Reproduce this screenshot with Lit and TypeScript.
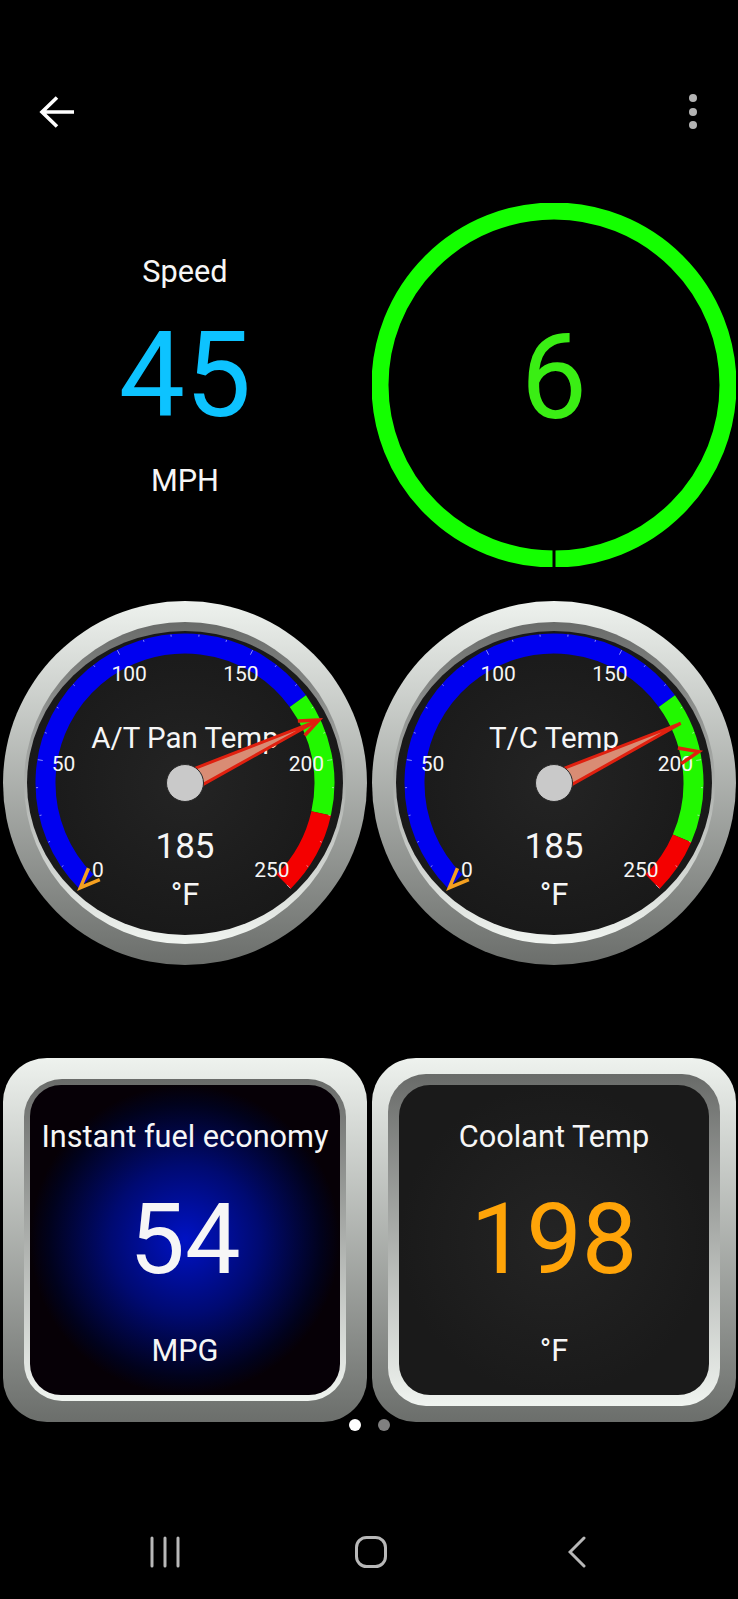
import { LitElement, html, svg, css } from 'lit';
import { customElement, property } from 'lit/decorators.js';

const CX = 182;
const CY = 182;

// compass angle for a gauge value: 0 sits at -135deg, 250 at +135deg
const valueAngle = (v: number) => -135 + (v / 250) * 270;

const polar = (deg: number, r: number): [number, number] => {
  const a = (deg * Math.PI) / 180;
  return [CX + r * Math.sin(a), CY - r * Math.cos(a)];
};

const arcPath = (from: number, to: number, r: number) => {
  const [x1, y1] = polar(valueAngle(from), r);
  const [x2, y2] = polar(valueAngle(to), r);
  const large = valueAngle(to) - valueAngle(from) > 180 ? 1 : 0;
  return `M${x1} ${y1}A${r} ${r} 0 ${large} 1 ${x2} ${y2}`;
};

@customElement('obd-gauge')
export class ObdGauge extends LitElement {
  @property({ type: String }) label = '';
  @property({ type: Number }) value = 0;
  @property({ type: Number }) greenEnd = 220;
  @property({ type: Number }) needleLength = 144;
  @property({ type: Number }) maxValue = 185;
  @property({ type: String }) gid = 'g';

  static styles = css`
    :host {
      display: block;
      width: 364px;
      height: 364px;
    }
    svg {
      display: block;
    }
    text {
      font-family: Roboto, sans-serif;
      fill: #f6f6f6;
      text-anchor: middle;
    }
    .scale {
      font-size: 21px;
    }
    .title {
      font-size: 29.5px;
    }
    .reading {
      font-size: 35px;
    }
    .unit {
      font-size: 31px;
    }
  `;

  private _ticks() {
    const ticks = [];
    for (let v = 0; v <= 250; v += 10) {
      const major = v % 50 === 0;
      const [x1, y1] = polar(valueAngle(v), major ? 144 : 147);
      const [x2, y2] = polar(valueAngle(v), 149);
      ticks.push(svg`<line x1=${x1} y1=${y1} x2=${x2} y2=${y2} stroke="#e8e8ff" stroke-width="0.8" opacity="0.75"></line>`);
    }
    return ticks;
  }

  private _scale() {
    return [0, 50, 100, 150, 200, 250].map((v) => {
      const [x, y] = polar(valueAngle(v), 123);
      return svg`<text class="scale" x=${x} y=${y + 7.5}>${v}</text>`;
    });
  }

  private _chevron(v: number, color: string) {
    const a = valueAngle(v);
    const tip = polar(a, 148);
    const off = (along: number, across: number) => {
      const r = (a * Math.PI) / 180;
      const ux = Math.sin(r);
      const uy = -Math.cos(r);
      return [tip[0] - ux * along - uy * across, tip[1] - uy * along + ux * across].join(',');
    };
    return svg`<polyline points="${off(19.5, 8)} ${tip.join(',')} ${off(19.5, -8)}" fill="none" stroke=${color} stroke-width="3.5"></polyline>`;
  }

  private _needle() {
    const a = valueAngle(this.value);
    const r = (a * Math.PI) / 180;
    const nx = Math.cos(r) * 9;
    const ny = Math.sin(r) * 9;
    const [bx, by] = polar(a, 16);
    const tip = polar(a, this.needleLength);
    return svg`<polygon points="${bx - nx},${by - ny} ${tip.join(',')} ${bx + nx},${by + ny}" fill="#d98c74" stroke="#e0200f" stroke-width="3"></polygon>`;
  }

  render() {
    const id = this.gid;
    return html`
      <svg width="364" height="364" viewBox="0 0 364 364">
        <defs>
          <linearGradient id="${id}-rim" x1="0" y1="0" x2="0" y2="1">
            <stop offset="0" stop-color="#eef2ee"></stop>
            <stop offset="1" stop-color="#6b6e6b"></stop>
          </linearGradient>
          <linearGradient id="${id}-bezel" x1="0" y1="0" x2="0" y2="1">
            <stop offset="0" stop-color="#696b69"></stop>
            <stop offset="1" stop-color="#f0f4f0"></stop>
          </linearGradient>
          <radialGradient id="${id}-face">
            <stop offset="0" stop-color="#242424"></stop>
            <stop offset="1" stop-color="#191919"></stop>
          </radialGradient>
        </defs>
        <circle cx=${CX} cy=${CY} r="182" fill="url(#${id}-rim)"></circle>
        <circle cx=${CX} cy=${CY} r="161" fill="url(#${id}-bezel)"></circle>
        <ellipse cx=${CX} cy=${CY} rx="158" ry="152" fill="url(#${id}-face)"></ellipse>
        <g fill="none" stroke-width="20">
          <path d=${arcPath(0, 175, 139.5)} stroke="#0000f0"></path>
          <path d=${arcPath(175, this.greenEnd, 139.5)} stroke="#22f800"></path>
          <path d=${arcPath(this.greenEnd, 250, 139.5)} stroke="#f40000"></path>
        </g>
        ${this._ticks()} ${this._scale()}
        <text class="title" x=${CX} y="147">${this.label}</text>
        <text class="reading" x=${CX} y="257">${this.value}</text>
        <text class="unit" x=${CX} y="304">°F</text>
        ${this._chevron(0, '#f5a020')} ${this._chevron(this.maxValue, '#e0200f')} ${this._needle()}
        <circle cx=${CX} cy=${CY} r="18.5" fill="#c9c9c9" stroke="#2a2a2a" stroke-width="1"></circle>
      </svg>
    `;
  }
}

@customElement('obd-tile')
export class ObdTile extends LitElement {
  @property({ type: String }) label = '';
  @property({ type: String }) value = '';
  @property({ type: String }) unit = '';
  @property({ type: Boolean, reflect: true }) blue = false;

  static styles = css`
    :host {
      display: block;
      width: 364px;
      height: 364px;
      box-sizing: border-box;
      border-radius: 44px;
      background: linear-gradient(#eef2ee, #6b6e6b);
      padding: 16px;
      font-family: Roboto, sans-serif;
      color: #f6f6f6;
      text-align: center;
    }
    :host([blue]) {
      padding: 21px;
    }
    .bezel {
      height: 100%;
      box-sizing: border-box;
      padding: 11px;
      border-radius: 38px;
      background: linear-gradient(#696b69, #f0f4f0);
    }
    :host([blue]) .bezel {
      padding: 6px;
    }
    .face {
      height: 100%;
      border-radius: 31px;
      overflow: hidden;
      background: radial-gradient(circle closest-side, #242424, #1a1a1a);
    }
    :host([blue]) .face {
      background: radial-gradient(circle closest-side, #0012c4 0%, #000a72 48%, #01021c 88%, #060006 100%);
    }
    .label {
      font-size: 30.7px;
      line-height: 36px;
      padding-top: 34px;
      white-space: nowrap;
    }
    .value {
      font-size: 99px;
      line-height: 102px;
      margin-top: 33px;
    }
    .amber {
      color: #ffa408;
    }
    .unit {
      font-size: 30.7px;
      line-height: 36px;
      margin-top: 43px;
    }
  `;

  render() {
    return html`
      <div class="bezel">
        <div class="face">
          <div class="label">${this.label}</div>
          <div class="value ${this.blue ? '' : 'amber'}">${this.value}</div>
          <div class="unit">${this.unit}</div>
        </div>
      </div>
    `;
  }
}

@customElement('app-root')
export class AppRoot extends LitElement {
  static styles = css`
    :host {
      display: block;
      width: 738px;
      height: 1599px;
      overflow: hidden;
      background: #000;
      font-family: Roboto, sans-serif;
      color: #f6f6f6;
    }
    svg {
      display: block;
    }
    .topbar {
      display: flex;
      justify-content: space-between;
      align-items: center;
      height: 40px;
      padding: 92px 40px 71px 39px;
    }
    .row {
      display: grid;
      grid-template-columns: 364px 364px;
      column-gap: 5px;
      padding-left: 3px;
    }
    .row + .row {
      margin-top: 34px;
    }
    .row.tiles {
      margin-top: 93px;
    }
    .speed {
      text-align: center;
      padding-top: 51px;
    }
    .speed .label {
      font-size: 30.7px;
      line-height: 36px;
    }
    .speed .value {
      font-size: 118px;
      line-height: 120px;
      color: #0dc3ff;
      margin-top: 26px;
    }
    .speed .unit {
      font-size: 30.7px;
      line-height: 36px;
      margin-top: 27px;
    }
    .ring text {
      font-family: Roboto, sans-serif;
      font-size: 118px;
      fill: #3aee14;
      text-anchor: middle;
    }
    .pager {
      display: flex;
      justify-content: center;
      gap: 17px;
      margin-top: -3px;
    }
    .dot {
      width: 12px;
      height: 12px;
      border-radius: 50%;
      background: #808080;
    }
    .dot.on {
      background: #fff;
    }
    .nav {
      display: grid;
      grid-template-columns: repeat(3, 206px);
      justify-items: center;
      padding: 105px 0 0 62px;
    }
  `;

  render() {
    return html`
      <div class="topbar">
        <svg width="36" height="32" viewBox="0 0 36 32" fill="none" stroke="#fff" stroke-width="3.6">
          <path d="M2 16H35M18 1.5 3 16l15 14.5"></path>
        </svg>
        <svg width="10" height="40" viewBox="0 0 10 40" fill="#b4b4b4">
          <circle cx="5" cy="6" r="4"></circle>
          <circle cx="5" cy="20" r="4"></circle>
          <circle cx="5" cy="33" r="4"></circle>
        </svg>
      </div>

      <div class="row">
        <div class="speed">
          <div class="label">Speed</div>
          <div class="value">45</div>
          <div class="unit">MPH</div>
        </div>
        <svg class="ring" width="364" height="364" viewBox="0 0 364 364">
          <circle cx="182" cy="182" r="174" fill="none" stroke="#14ff00" stroke-width="17"></circle>
          <rect x="180.5" y="346" width="3" height="18" fill="#000"></rect>
          <text x="182" y="215">6</text>
        </svg>
      </div>

      <div class="row">
        <obd-gauge gid="pan" label="A/T Pan Temp" value="185" greenEnd="220" needleLength="144" maxValue="185"></obd-gauge>
        <obd-gauge gid="tc" label="T/C Temp" value="185" greenEnd="230" needleLength="140" maxValue="197"></obd-gauge>
      </div>

      <div class="row tiles">
        <obd-tile blue label="Instant fuel economy" value="54" unit="MPG"></obd-tile>
        <obd-tile label="Coolant Temp" value="198" unit="°F"></obd-tile>
      </div>

      <div class="pager">
        <div class="dot on"></div>
        <div class="dot"></div>
      </div>

      <div class="nav">
        <svg width="32" height="32" viewBox="0 0 32 32" fill="none" stroke="#b8b8b8" stroke-width="3" stroke-linecap="round">
          <path d="M3 2V30M16 2V30M29 2V30"></path>
        </svg>
        <svg width="32" height="32" viewBox="0 0 32 32" fill="none" stroke="#b8b8b8" stroke-width="3">
          <rect x="1.5" y="1.5" width="29" height="29" rx="10"></rect>
        </svg>
        <svg width="18" height="32" viewBox="0 0 18 32" fill="none" stroke="#b8b8b8" stroke-width="3" stroke-linecap="round">
          <path d="M16 2 2 16l14 14"></path>
        </svg>
      </div>
    `;
  }
}
